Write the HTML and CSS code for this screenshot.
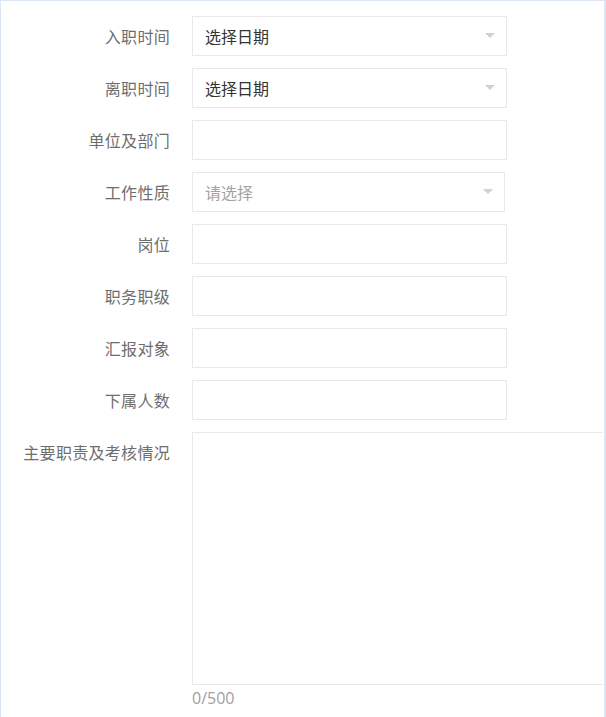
FILE: index.html
```html
<!DOCTYPE html>
<html lang="zh">
<head>
<meta charset="utf-8">
<link rel="stylesheet" href="styles.css">
</head>
<body>
<div class="panel">
  <form class="form">
    <div class="row">
      <label class="label">入职时间</label>
      <div class="field select"><span class="value">选择日期</span><span class="arrow"></span></div>
    </div>
    <div class="row">
      <label class="label">离职时间</label>
      <div class="field select"><span class="value">选择日期</span><span class="arrow"></span></div>
    </div>
    <div class="row">
      <label class="label">单位及部门</label>
      <div class="field"></div>
    </div>
    <div class="row">
      <label class="label">工作性质</label>
      <div class="field select narrow"><span class="placeholder">请选择</span><span class="arrow"></span></div>
    </div>
    <div class="row">
      <label class="label">岗位</label>
      <div class="field"></div>
    </div>
    <div class="row">
      <label class="label">职务职级</label>
      <div class="field"></div>
    </div>
    <div class="row">
      <label class="label">汇报对象</label>
      <div class="field"></div>
    </div>
    <div class="row">
      <label class="label">下属人数</label>
      <div class="field"></div>
    </div>
    <div class="row area-row">
      <label class="label">主要职责及考核情况</label>
      <div class="area-wrap">
        <div class="textarea"></div>
        <div class="counter">0/500</div>
      </div>
    </div>
  </form>
</div>
</body>
</html>
```

FILE: styles.css
```css
html, body {
  margin: 0;
  padding: 0;
  background: #ffffff;
}
body {
  font-family: "Noto Sans CJK SC", "Noto Sans", sans-serif;
  font-size: 16px;
}
.panel {
  width: 603px;
  height: 716px;
  border-top: 1px solid #dde6f3;
  border-left: 1px solid #dde6f3;
  border-right: 2px solid #dde6f3;
  overflow: hidden;
}
.form {
  padding-top: 15px;
  display: flex;
  flex-direction: column;
  gap: 12px;
}
.row {
  display: flex;
  align-items: center;
  height: 40px;
}
.label {
  width: 169px;
  text-align: right;
  color: #6e6e6e;
  line-height: 40px;
  margin-right: 22px;
  flex-shrink: 0;
  letter-spacing: 0.3px;
}
.field {
  width: 313px;
  height: 38px;
  border: 1px solid #e9e9e9;
  box-sizing: content-box;
  display: flex;
  align-items: center;
  padding: 0;
  position: relative;
}
.field.narrow {
  width: 311px;
}
.value {
  margin-left: 12px;
  color: #333333;
}
.placeholder {
  margin-left: 12px;
  color: #a3a3a3;
}
.arrow {
  position: absolute;
  right: 11px;
  top: 16px;
  width: 0;
  height: 0;
  border-left: 5px solid transparent;
  border-right: 5px solid transparent;
  border-top: 5px solid #d0d0d0;
}
.area-row {
  height: auto;
  align-items: flex-start;
}
.area-wrap {
  display: flex;
  flex-direction: column;
}
.textarea {
  width: 410px;
  height: 251px;
  border: 1px solid #e9e9e9;
  border-right: none;
}
.counter {
  margin-top: 1px;
  color: #a0a0a0;
  font-family: "Open Sans", "Noto Sans", sans-serif;
  font-size: 16px;
  line-height: 24px;
}
```
